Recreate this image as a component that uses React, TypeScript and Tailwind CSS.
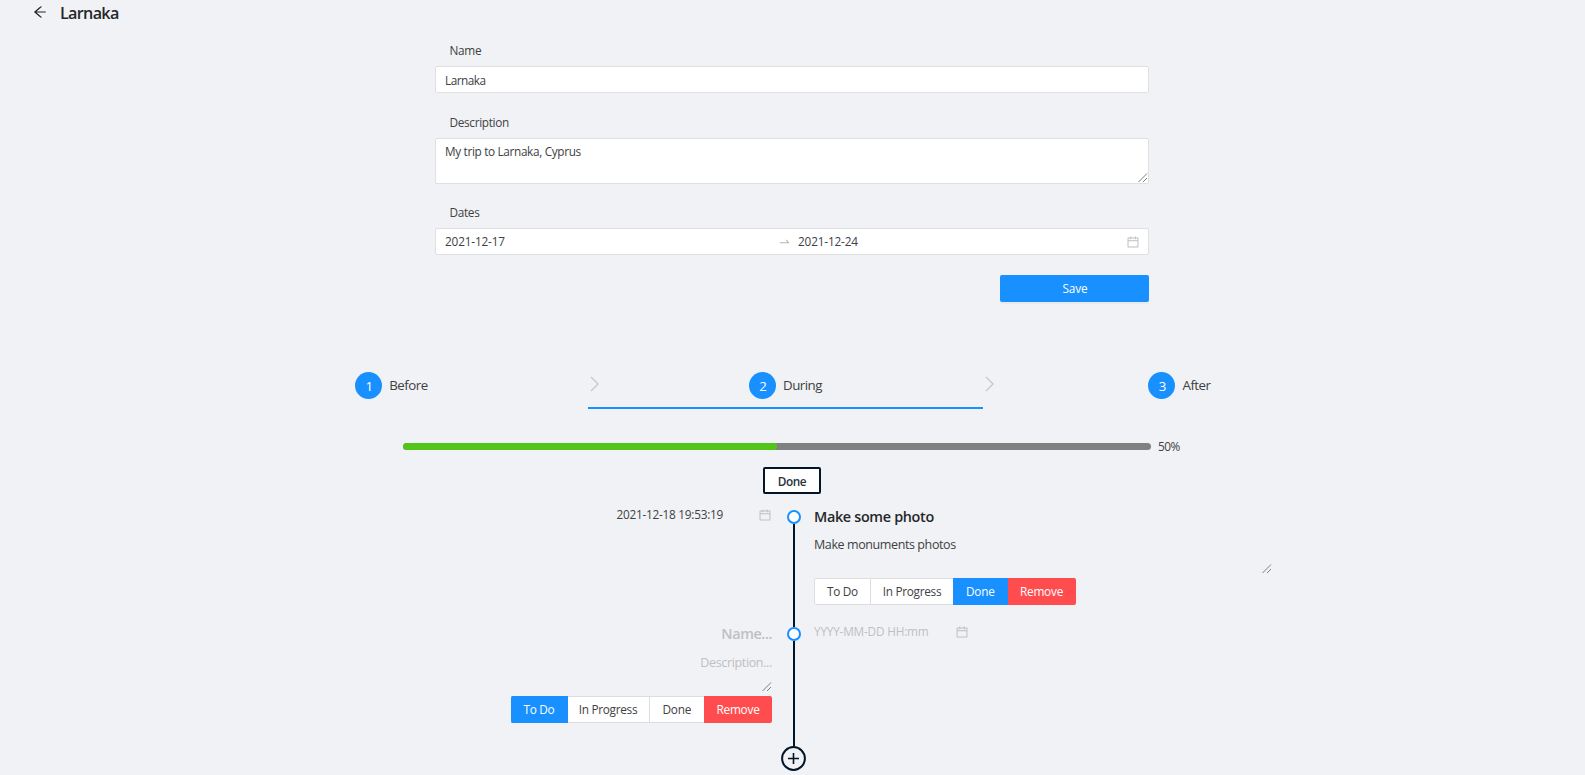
import type { ReactNode } from "react";
import {
  AiOutlineArrowLeft,
  AiOutlineCalendar,
  AiOutlineSwapRight,
} from "react-icons/ai";

function ResizeHandle() {
  return (
    <svg width="10" height="10" viewBox="0 0 10 10" fill="none" stroke="#808080" strokeWidth="1">
      <path d="M0.5 9 L9 0.5 M5 9 L9 5" />
    </svg>
  );
}

function FieldLabel({ children }: { children: ReactNode }) {
  return (
    <div className="ml-[14.5px] flex h-6 items-center pb-[2px] tracking-[-0.32px]">
      {children}
    </div>
  );
}

type Status = "To Do" | "In Progress" | "Done";

function StatusButtons({ active }: { active: Status }) {
  const options: { label: Status; size: string }[] = [
    { label: "To Do", size: "w-[57px] tracking-[-0.3px]" },
    { label: "In Progress", size: "w-[82px] tracking-[-0.3px]" },
    { label: "Done", size: "w-[54.5px] tracking-[-0.2px]" },
  ];
  return (
    <div className="flex h-[27px] overflow-hidden rounded-[2px]">
      {options.map((o, i) => (
        <div
          key={o.label}
          className={`${o.size} flex items-center justify-center border-y pb-px ${
            o.label === active
              ? "border-[#1890ff] bg-[#1890ff] text-white"
              : `border-[#dcdddf] bg-white ${i === 0 ? "rounded-l-[2px] border-x" : i === 1 && active === "To Do" ? "border-r" : ""}`
          }`}
        >
          {o.label}
        </div>
      ))}
      <div className="flex w-[68px] items-center justify-center bg-[#ff4d4f] pb-px tracking-[-0.2px] text-white">
        Remove
      </div>
    </div>
  );
}

function Step({
  number,
  title,
  active,
  chevron,
  shift = "",
}: {
  number: number;
  title: string;
  active?: boolean;
  chevron?: boolean;
  shift?: string;
}) {
  return (
    <div
      className={`grid h-[37px] w-[395px] grid-cols-[1fr_auto_1fr] border-b-2 ${
        active ? "border-[#1890ff]" : "border-transparent"
      } ${shift}`}
    >
      <div className="pt-[4px] pl-[2px]">
        {chevron && (
          <svg width="10" height="16" viewBox="0 0 10 16" fill="none" stroke="#c3c5c8" strokeWidth="1.2">
            <path d="M1 1 L8 8 L1 15" />
          </svg>
        )}
      </div>
      <div className="flex h-[27px] items-center gap-[7px]">
        <span className="flex size-[27px] items-center justify-center rounded-full bg-[#1890ff] pt-px pl-px text-[13.3px] text-white">
          {number}
        </span>
        <span className="pb-px text-[13.3px] tracking-[-0.5px]">{title}</span>
      </div>
    </div>
  );
}

function Dot() {
  return <span className="size-[14px] shrink-0 rounded-full border-2 border-[#1890ff] bg-white" />;
}

export default function App() {
  return (
    <div className="h-[775px] w-full overflow-hidden bg-[#f0f2f5] font-['Open_Sans','Noto_Sans',sans-serif] text-[11.8px] leading-4 text-[#404142]">
      <header className="flex h-[39px] items-start pl-[32px]">
        <AiOutlineArrowLeft className="mt-[4px] size-[16px] text-[#262626]" />
        <h1 className="ml-[12px] mt-[0.5px] text-[16.2px] leading-6 font-semibold tracking-[-0.7px] text-[#26272a]">
          Larnaka
        </h1>
      </header>

      <form className="ml-[435px] w-[714px]">
        <FieldLabel>Name</FieldLabel>
        <div className="mt-[3px] flex h-[27px] items-center rounded-[2px] border border-[#dfe0e2] bg-white pl-[9px] tracking-[-0.5px]">
          Larnaka
        </div>

        <div className="mt-[18px]">
          <FieldLabel>Description</FieldLabel>
        </div>
        <div className="mt-[3px] flex h-[46px] justify-between rounded-[2px] border border-[#dfe0e2] bg-white pl-[9px] tracking-[-0.34px]">
          <span className="pt-[4px]">My trip to Larnaka, Cyprus</span>
          <span className="self-end">
            <ResizeHandle />
          </span>
        </div>

        <div className="mt-[17px]">
          <FieldLabel>Dates</FieldLabel>
        </div>
        <div className="mt-[3px] flex h-[27px] items-center rounded-[2px] border border-[#dfe0e2] bg-white pr-[8px] pl-[9px] tracking-[-0.17px]">
          <span className="w-[333px] pb-px">2021-12-17</span>
          <AiOutlineSwapRight className="size-[13px] text-[#b5b5b5]" />
          <span className="ml-[7px] flex-1 pb-px">2021-12-24</span>
          <AiOutlineCalendar className="size-[14px] text-[#bfbfbf]" />
        </div>

        <div className="mt-5 ml-auto flex h-[27px] w-[149px] items-center justify-center rounded-[2px] bg-[#1890ff] pb-px pl-px tracking-[-0.15px] text-white shadow-[0_2px_0_rgba(0,0,0,0.03)]">
          Save
        </div>
      </form>

      <nav className="mt-[70px] ml-[193px] flex">
        <Step number={1} title="Before" shift="pl-[2px]" />
        <Step number={2} title="During" active chevron />
        <Step number={3} title="After" chevron shift="pr-[2px]" />
      </nav>

      <div className="mt-[29px] ml-[403px] flex h-4 items-center">
        <div className="h-[7px] w-[748px] overflow-hidden rounded-full bg-[#808080]">
          <div className="h-full w-1/2 rounded-full bg-[#52c41a]" />
        </div>
        <span className="ml-[7px] tracking-[-0.5px]">50%</span>
      </div>

      <div className="mt-[13px] ml-[763px] flex h-[27px] w-[58px] items-center justify-center rounded-[2px] border-2 border-[#001529] bg-white pt-px font-semibold tracking-[-0.4px] text-[#26323e]">
        Done
      </div>

      <section className="mt-[6px] grid grid-cols-[772px_42px_1fr]">
        <div className="flex flex-col items-end">
          <div className="flex h-[116px] items-start pt-[6px]">
            <span className="mr-[35px] tracking-[-0.25px]">2021-12-18 19:53:19</span>
            <AiOutlineCalendar className="mt-[2px] size-[14px] text-[#bfbfbf]" />
          </div>
          <div className="mt-px h-[34px] pt-[5px] text-[14.4px] leading-6 font-semibold tracking-[-0.4px] text-[#bfc0c2]">
            Name...
          </div>
          <div className="h-[31px] pt-[2px] text-[12.5px] leading-5 tracking-[-0.35px] text-[#bfc0c2]">
            Description...
          </div>
          <ResizeHandle />
          <div className="mt-[4px]">
            <StatusButtons active="To Do" />
          </div>
        </div>

        <div className="flex flex-col items-center pt-[10px] pl-px">
          <Dot />
          <span className="h-[103px] w-[2px] bg-[#001529]" />
          <Dot />
          <span className="h-[105px] w-[2px] bg-[#001529]" />
          <svg width="25" height="25" viewBox="0 0 25 25" fill="none" stroke="#001529">
            <circle cx="12.5" cy="12.5" r="11.4" strokeWidth="2" />
            <path d="M12.5 7 V18 M7 12.5 H18" strokeWidth="1.6" />
          </svg>
        </div>

        <div className="flex flex-col items-start">
          <div className="h-[33px] pt-[5px] text-[14.4px] leading-6 font-semibold tracking-[-0.33px] text-[#26272a]">
            Make some photo
          </div>
          <div className="h-[31px] pt-[2px] text-[12.5px] leading-5 tracking-[-0.4px]">
            Make monuments photos
          </div>
          <div className="ml-[448px]">
            <ResizeHandle />
          </div>
          <div className="mt-[4px]">
            <StatusButtons active="Done" />
          </div>
          <div className="mt-[18px] flex items-center">
            <span className="w-[140.5px] tracking-[-0.2px] text-[#bfc0c2]">YYYY-MM-DD HH:mm</span>
            <AiOutlineCalendar className="mt-px size-[14px] text-[#bfbfbf]" />
          </div>
        </div>
      </section>
    </div>
  );
}
